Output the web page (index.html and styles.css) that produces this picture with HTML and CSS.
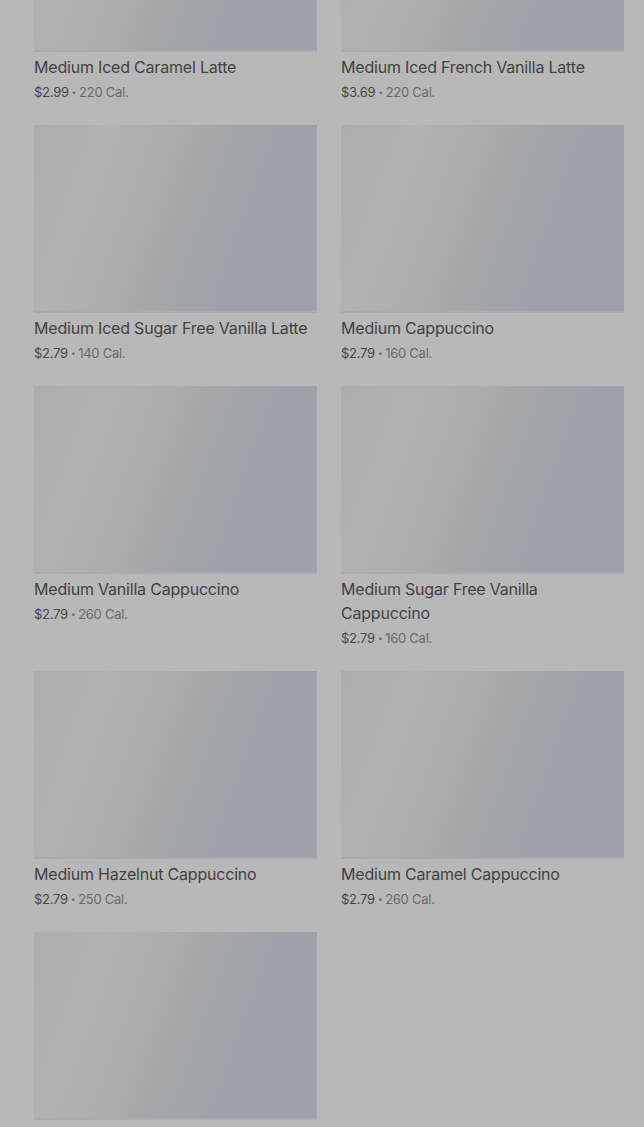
FILE: index.html
```html
<!DOCTYPE html>
<html>
<head>
<meta charset="utf-8">
<link rel="stylesheet" href="styles.css">
</head>
<body>
<div class="page">
  <div class="grid">
    <div class="card">
      <div class="thumb"></div>
      <div class="title">Medium Iced Caramel Latte</div>
      <div class="meta"><span class="price">$2.99</span><span class="dot">•</span><span class="cal">220 Cal.</span></div>
    </div>
    <div class="card">
      <div class="thumb"></div>
      <div class="title">Medium Iced French Vanilla Latte</div>
      <div class="meta"><span class="price">$3.69</span><span class="dot">•</span><span class="cal">220 Cal.</span></div>
    </div>
    <div class="card">
      <div class="thumb"></div>
      <div class="title">Medium Iced Sugar Free Vanilla Latte</div>
      <div class="meta"><span class="price">$2.79</span><span class="dot">•</span><span class="cal">140 Cal.</span></div>
    </div>
    <div class="card">
      <div class="thumb"></div>
      <div class="title">Medium Cappuccino</div>
      <div class="meta"><span class="price">$2.79</span><span class="dot">•</span><span class="cal">160 Cal.</span></div>
    </div>
    <div class="card">
      <div class="thumb"></div>
      <div class="title">Medium Vanilla Cappuccino</div>
      <div class="meta"><span class="price">$2.79</span><span class="dot">•</span><span class="cal">260 Cal.</span></div>
    </div>
    <div class="card">
      <div class="thumb"></div>
      <div class="title">Medium Sugar Free Vanilla Cappuccino</div>
      <div class="meta"><span class="price">$2.79</span><span class="dot">•</span><span class="cal">160 Cal.</span></div>
    </div>
    <div class="card">
      <div class="thumb"></div>
      <div class="title">Medium Hazelnut Cappuccino</div>
      <div class="meta"><span class="price">$2.79</span><span class="dot">•</span><span class="cal">250 Cal.</span></div>
    </div>
    <div class="card">
      <div class="thumb"></div>
      <div class="title">Medium Caramel Cappuccino</div>
      <div class="meta"><span class="price">$2.79</span><span class="dot">•</span><span class="cal">260 Cal.</span></div>
    </div>
    <div class="card">
      <div class="thumb"></div>
      <div class="title">Medium Mocha Latte</div>
      <div class="meta"><span class="price">$2.99</span><span class="dot">•</span><span class="cal">240 Cal.</span></div>
    </div>
  </div>
</div>
</body>
</html>
```
FILE: styles.css
```css
html, body {
  margin: 0;
  padding: 0;
  background: #b8b8b8;
  overflow: hidden;
}
body {
  font-family: Inter, "Noto Sans", sans-serif;
  color: #434343;
}
.page {
  padding: 0 20px 0 34px;
  height: 1127px;
  overflow: hidden;
}
.grid {
  margin-top: -136px;
  display: grid;
  grid-template-columns: 283px 283px;
  column-gap: 24px;
  row-gap: 21px;
  align-items: start;
}
.card {
  display: flex;
  flex-direction: column;
}
.thumb {
  height: 188px;
  background: linear-gradient(110deg, #adadad 0%, #b2b2b2 22%, #acacac 40%, #a7a7a7 50%, #a2a4a9 60%, #9ea1a9 72%, #9ea1a9 100%);
  box-shadow: inset 0 -2px 0 #a9abb0;
}
.title {
  margin-top: 3px;
  font-size: 16px;
  line-height: 24px;
  letter-spacing: -0.2px;
  color: #424242;
}
.meta {
  margin-top: 1px;
  font-size: 13px;
  line-height: 24px;
  letter-spacing: -0.25px;
  display: flex;
  align-items: center;
}
.price {
  color: #474747;
}
.dot {
  font-size: 8px;
  margin: 0 3px;
  color: #6e6e6e;
}
.cal {
  color: #6a6a6a;
}
```
